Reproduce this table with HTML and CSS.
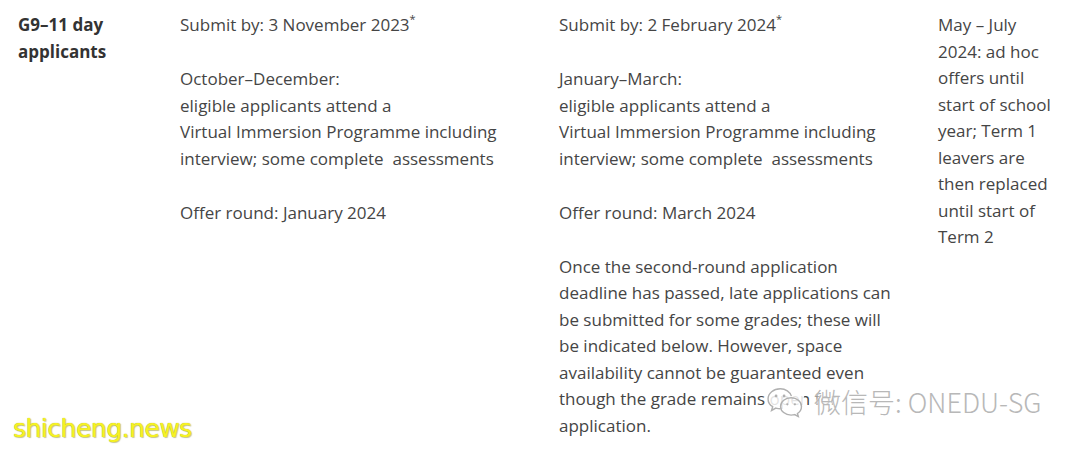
FILE: index.html
```html
<!DOCTYPE html>
<html>
<head>
<meta charset="utf-8">
<link rel="stylesheet" href="styles.css">
</head>
<body>
<div class="table">
  <div class="cell head">G9–11 day applicants</div>
  <div class="cell c2">
    <p>Submit by: 3 November 2023<sup>*</sup></p>
    <p>October–December:<br>eligible applicants attend a<br>Virtual Immersion Programme including interview; some complete&nbsp; assessments</p>
    <p>Offer round: January 2024</p>
  </div>
  <div class="cell c3">
    <p>Submit by: 2 February 2024<sup>*</sup></p>
    <p>January–March:<br>eligible applicants attend a<br>Virtual Immersion Programme including interview; some complete&nbsp; assessments</p>
    <p>Offer round: March 2024</p>
    <p>Once the second-round application deadline has passed, late applications can be submitted for some grades; these will be indicated below. However, space availability cannot be guaranteed even though the grade remains open for application.</p>
  </div>
  <div class="cell c4">
    <p>May – July 2024: ad hoc offers until start of school year; Term 1 leavers are then replaced until start of Term 2</p>
  </div>
</div>
<div class="wm-site">shicheng.news</div>
<div class="wm-wechat">
  <svg class="wx" viewBox="0 0 40 34" width="38" height="32">
    <path d="M26.8 10.8C25.4 6.2 20.6 3 15 3 7.8 3 2 7.8 2 13.7c0 3.4 1.9 6.4 4.9 8.3L5.7 26l4.6-2.5c1.5.4 3 .7 4.7.7" fill="none" stroke="#b0b0b0" stroke-width="1.5"/>
    <path d="M26.5 12.5c-6.2 0-11.2 4.1-11.2 9.2s5 9.2 11.2 9.2c1.3 0 2.6-.2 3.8-.5l3.9 2.1-1-3.3c2.6-1.7 4.3-4.4 4.3-7.5 0-5.1-5-9.2-11-9.2z" fill="none" stroke="#b0b0b0" stroke-width="1.5"/>
    <circle cx="10.5" cy="10.5" r="1.5" fill="#b0b0b0"/>
    <circle cx="19" cy="10.5" r="1.5" fill="#b0b0b0"/>
    <circle cx="22.5" cy="19.5" r="1.2" fill="#b0b0b0"/>
    <circle cx="30.5" cy="19.5" r="1.2" fill="#b0b0b0"/>
  </svg>
  <span>微信号: ONEDU-SG</span>
</div>
</body>
</html>
```
FILE: styles.css
```css
html, body {
  margin: 0;
  padding: 0;
  background: #fff;
}
body {
  font-family: "Open Sans", "Liberation Sans", sans-serif;
  font-size: 17px;
  line-height: 26.5px;
  color: #454545;
  width: 1080px;
  height: 450px;
  overflow: hidden;
  position: relative;
}
.table {
  display: grid;
  grid-template-columns: 162px 379px 379px 160px;
  padding-top: 12px;
}
.cell {
  padding-left: 18px;
  padding-right: 30px;
}
.c3 {
  padding-right: 23px;
}
.c4 {
  padding-right: 26px;
}
.head {
  font-weight: 700;
  color: #333;
  padding-right: 20px;
}
p {
  margin: 0 0 27.5px 0;
}
sup {
  font-size: 11px;
  line-height: 0;
  vertical-align: 0;
  position: relative;
  top: -8px;
}
.wm-site {
  position: absolute;
  left: 13px;
  top: 412px;
  font-family: "DejaVu Sans", sans-serif;
  font-size: 25px;
  line-height: 34px;
  color: #f6f224;
  letter-spacing: -0.5px;
  text-shadow: 0 0 1px #b0aa00, 1px 1px 1px rgba(120,120,0,0.4);
}
.wm-wechat {
  position: absolute;
  left: 766px;
  top: 384px;
  display: flex;
  align-items: center;
  gap: 10px;
  color: #b8b8b8;
  font-family: "Noto Sans CJK SC", "DejaVu Sans", sans-serif;
  font-size: 27px;
  line-height: 36px;
  font-weight: 300;
  text-shadow: 0 0 2px #fff, 0 0 4px #fff, 0 0 6px #fff;
}
.wx {
  background: rgba(255,255,255,0.85);
  border-radius: 6px;
}
```
